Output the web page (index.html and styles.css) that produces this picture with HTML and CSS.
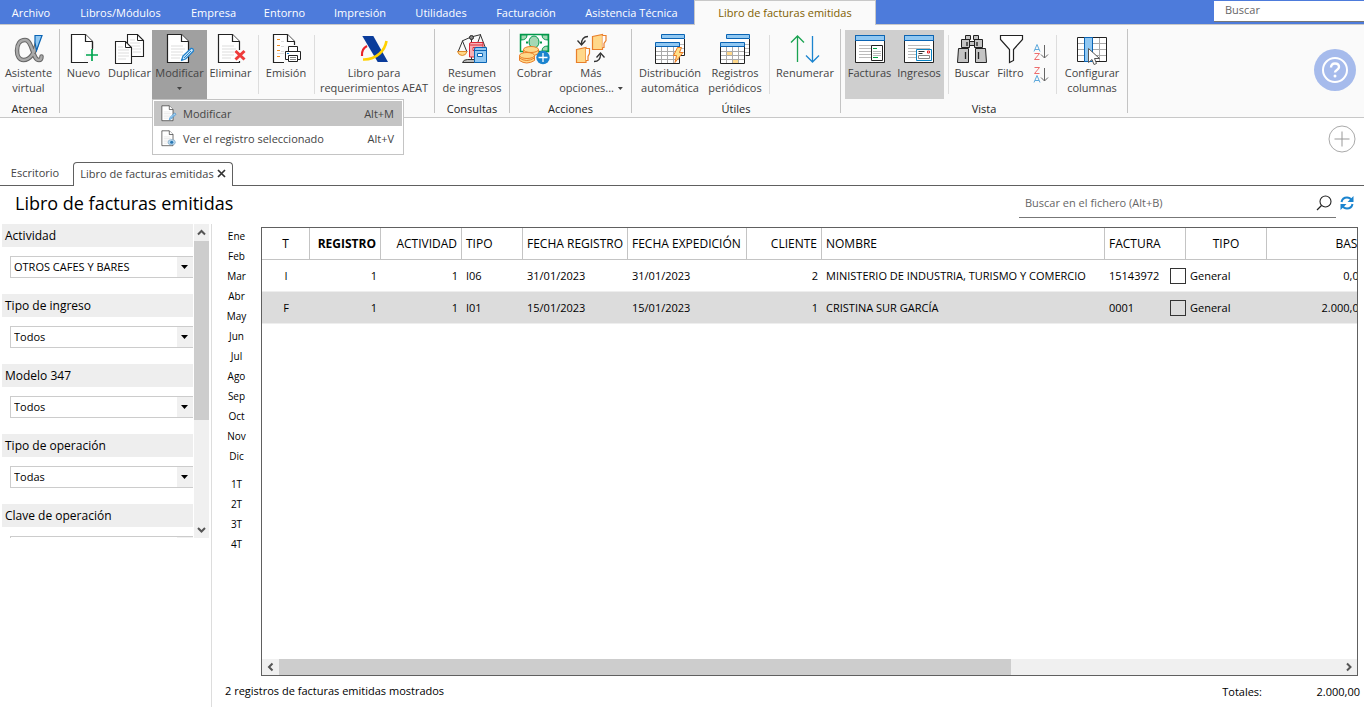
FILE: index.html
```html
<!DOCTYPE html>
<html lang="es">
<head>
<meta charset="utf-8">
<title>Libro de facturas emitidas</title>
<link rel="stylesheet" href="styles.css">
</head>
<body>
<svg class="defs" aria-hidden="true">
  <defs>
    <g id="doc"><path d="M3.500 1.500h14l7 7v21h-21z" fill="#fff" stroke="#222" stroke-width="1.200"/><path d="M17.500 1.500v7h7" fill="#fff" stroke="#222" stroke-width="1.200"/></g>
    <g id="doc-lines"><path d="M7 13h12M7 16h14M7 19h12M7 22h12M7 25h9" stroke="#ddd" fill="none"/></g>
    <g id="pencil"><path d="M17.500 27.500l1.500-4.500 8-7.500q2.500-.5 2.500 2.500l-8 8z" fill="#cfe8fa" stroke="#2382cc" stroke-width="1.300" stroke-linejoin="round"/><path d="M20 25l7-7" stroke="#2382cc"/></g>
    <g id="tables">
      <path d="M7.500 1.500h23v21h-23z" fill="#fff"/><path d="M26 11.500h4M26 15.500h4M26 19.500h4" stroke="#bbb"/><path d="M30.500 6v16.500h-4" fill="none" stroke="#222"/><path d="M7.500 1.500h23v4h-23z" fill="#91c8f2" stroke="#0a64b4"/>
      <path d="M1.500 13h24v17.500h-24z" fill="#fff" stroke="#222"/><path d="M7.500 14v16M13.500 14v16M19.500 14v16M2 18.500h23M2 22.500h23M2 26.500h23" stroke="#aaa"/><path d="M1.500 9.500h24v4h-24z" fill="#91c8f2" stroke="#0a64b4"/>
    </g>
    <g id="window"><path d="M1.500 2.500h29v27h-29z" fill="#fff" stroke="#222"/><path d="M1.500 2.500h29v5h-29z" fill="#91c8f2" stroke="#0a64b4"/><path d="M5 12.500h22M5 15.500h22M5 18.500h12M5 21.500h12M5 24.500h12" stroke="#bbb"/></g>
  </defs>
</svg>

<div class="app">
  <header class="menubar">
    <nav class="tabs" aria-label="Menú principal">
      <button>Archivo</button><button>Libros/Módulos</button><button>Empresa</button><button>Entorno</button><button>Impresión</button><button>Utilidades</button><button>Facturación</button><button>Asistencia Técnica</button><button class="current">Libro de facturas emitidas</button>
    </nav>
    <input class="menu-search" type="text" placeholder="Buscar" aria-label="Buscar">
  </header>

  <section class="ribbon">
    <div class="group g-atenea">
      <div class="tools">
        <button class="tool"><svg class="icon" viewBox="0 0 32 32"><g fill="none" stroke-linecap="round"><path d="M24 9C22 20 17 27 10.500 27 6 27 4 22.500 4 17.500 4 11 7 7 12 7 20 7 19 27 26 27 28 27 28.500 25 28.500 23.500" stroke="#666" stroke-width="4.500"/><path d="M24 9C22 20 17 27 10.500 27 6 27 4 22.500 4 17.500 4 11 7 7 12 7 20 7 19 27 26 27 28 27 28.500 25 28.500 23.500" stroke="#aaa" stroke-width="2.400"/></g><path d="M22 2.500h7l-5.500 15-1.500-8z" fill="#91c8f2" stroke="#0a64b4" stroke-width="1.200"/></svg><span>Asistente<br>virtual</span></button>
      </div>
      <div class="caption">Atenea</div>
    </div>

    <div class="group g-edit">
      <div class="tools">
        <button class="tool"><svg class="icon" viewBox="0 0 32 32"><use href="#doc"/><path d="M16 17h14v14H16z" fill="#fafafa"/><path d="M16 29.500h4M24.500 9v6" stroke="#222" stroke-width="1.200"/><path d="M24 16v12M18 22h12" stroke="#00a550" stroke-width="1.700"/></svg><span>Nuevo</span></button>
        <button class="tool"><svg class="icon" viewBox="0 0 32 32"><path d="M13.500 1.500h10l6 6v16h-16z" fill="#fff" stroke="#222" stroke-width="1.100"/><path d="M23.500 1.500v6h6" fill="none" stroke="#222"/><path d="M16 7h5M16 10h10M16 13h10M18 16h9M19 19h8" stroke="#ddd"/><path d="M1.500 8.500h10l6 6v16h-16z" fill="#fff" stroke="#222" stroke-width="1.100"/><path d="M11.500 8.500v6h6" fill="none" stroke="#222"/><path d="M4 14h5M4 17h11M4 20h11M4 23h11M4 26h8" stroke="#ddd"/></svg><span>Duplicar</span></button>
        <div class="dropdown">
          <button class="tool pressed" aria-expanded="true"><svg class="icon" viewBox="0 0 32 32"><use href="#doc"/><use href="#doc-lines"/><use href="#pencil"/></svg><span>Modificar</span><i class="caret"></i></button>
          <div class="menu">
            <button class="menu-item hover"><svg viewBox="0 0 32 32"><use href="#doc"/><use href="#doc-lines"/><use href="#pencil"/></svg><span>Modificar</span><kbd>Alt+M</kbd></button>
            <button class="menu-item"><svg viewBox="0 0 32 32"><use href="#doc"/><use href="#doc-lines"/><ellipse cx="22" cy="23" rx="7" ry="5" fill="#b8d8ef" stroke="#7199b8"/><circle cx="22" cy="23" r="3" fill="#2878b4"/></svg><span>Ver el registro seleccionado</span><kbd>Alt+V</kbd></button>
          </div>
        </div>
        <button class="tool"><svg class="icon" viewBox="0 0 32 32"><use href="#doc"/><use href="#doc-lines"/><path d="M20 17h11v11H20z" fill="#fafafa"/><path d="M20.500 18l9 8.500M29.500 18l-9 8.500" stroke="#ee3a3a" stroke-width="3"/></svg><span>Eliminar</span></button>
        <i class="sep"></i>
        <button class="tool"><svg class="icon" viewBox="0 0 32 32"><use href="#doc"/><path d="M7 6.500h3M7 12.500h3M7 17.500h3M7 23.500h3" stroke="#f28c1e"/><path d="M11 8.500h3M11 13.500h8M11 18.500h4M7 20.500h7" stroke="#ddd"/><path d="M14 12h17v18H14z" fill="#fafafa"/><path d="M18.500 18v-4.500h9V18" fill="#fff" stroke="#222"/><path d="M15.500 18.500h15v8h-15z" fill="#fff" stroke="#222"/><path d="M18.500 22.500h9v6h-9z" fill="#fff" stroke="#222"/><path d="M20 24.500h6M20 26.500h6" stroke="#888"/><path d="M17 20.500h2" stroke="#1683d8"/></svg><span>Emisión</span></button>
        <i class="sep"></i>
        <button class="tool"><svg class="icon" viewBox="0 0 32 32"><path d="M4.300 3h11l14.700 26H19.700z" fill="#0a3c9b"/><path d="M9 13C5 15 3.500 18 4 23" fill="none" stroke="#e8232a" stroke-width="2.200"/><path d="M28.500 8C27 17 19 27 5 26.500" fill="none" stroke="#ffd100" stroke-width="2.600"/></svg><span>Libro para<br>requerimientos AEAT</span></button>
      </div>
    </div>

    <div class="group g-query">
      <div class="tools">
        <button class="tool"><svg class="icon" viewBox="0 0 32 32"><path d="M6.500 29.500q1-3 5-3h7v3z" fill="#bbb" stroke="#333"/><path d="M15.500 5v21M6 8l9-4 10-2.500M6.500 8L2 19M6.500 8l4.500 11M24.500 2l5 13M24.500 2L22 9" fill="none" stroke="#333"/><circle cx="15.500" cy="4.500" r="2" fill="#888" stroke="#222"/><path d="M1.500 18.500h9.500q-1 4-4.700 4t-4.800-4z" fill="#ffd88a" stroke="#e08a2c"/><path d="M13.500 11q0-1.500 1.500-1.500h12V24H13.500z" fill="#f7b0b4" stroke="#dc2a38"/><path d="M14 12h13M17 14.500h5v3h-5z" fill="#fff" stroke="#dc2a38"/><path d="M18.500 16q0-1.500 1.500-1.500h10.500v15h-12z" fill="#91c8f2" stroke="#0a64b4"/><path d="M19 17.500h11" stroke="#0a64b4"/><path d="M21.500 20.500h5v3h-5z" fill="#fff" stroke="#0a64b4"/></svg><span>Resumen<br>de ingresos</span></button>
      </div>
      <div class="caption">Consultas</div>
    </div>

    <div class="group g-actions">
      <div class="tools">
        <button class="tool"><svg class="icon" viewBox="0 0 32 32"><path d="M1.500 1.500h28v17h-28z" fill="#fff" stroke="#00984a" stroke-width="1.500"/><path d="M2 2h6q0 5-6 5zM29 2h-6q0 5 6 5zM29 18h-6q0-5 6-5z" fill="#a5d8b4" stroke="#00984a"/><ellipse cx="15" cy="9" rx="5" ry="6" fill="#a5d8b4" stroke="#00984a"/><path d="M7 9.500h2M21 9.500h2" stroke="#00984a" stroke-width="2"/><g fill="#ffd88a" stroke="#e97f2a"><path d="M4.500 16.500v4q7 5 15 0v-4z"/><ellipse cx="12" cy="16.500" rx="7.500" ry="3"/><path d="M.5 22.500v5q7 5 15 0v-5z"/><path d="M.5 25q7 5 15 0" fill="none"/><ellipse cx="8" cy="22.500" rx="7.500" ry="3"/></g><circle cx="24" cy="24.500" r="6.700" fill="#1b84cf"/><path d="M24 20v9M19.500 24.500h9" stroke="#fff" stroke-width="1.300"/></svg><span>Cobrar</span></button>
        <button class="tool"><svg class="icon" viewBox="0 0 32 32"><g fill="#ffd88a" stroke="#e97f2a" stroke-width="1.200"><path d="M17.500 3.500l10-2v15h-10z"/><path d="M27.500 2.500h3.500v5l-2 3v4h-1.500" fill="#fff"/><path d="M1.500 16.500l9.500-2v15H1.500z"/><path d="M11 15.500h3.500v5l-1.500 3v4h-2" fill="#fff"/></g><path d="M13 3.500Q6.500 3.500 6.500 11M2.500 7.500l4 4.500 4-4.500M19 28.500q6.500 0 6.500-7M21.500 24.500l4-4.500 4 4.500" fill="none" stroke="#333" stroke-width="1.300"/></svg><span>Más<br>opciones... <i class="caret inline"></i></span></button>
      </div>
      <div class="caption">Acciones</div>
    </div>

    <div class="group g-utils">
      <div class="tools">
        <button class="tool"><svg class="icon" viewBox="0 0 32 32"><use href="#tables"/><path d="M23.500 14.500h4l-2 5h3.500l-8 10 1.500-7h-3z" fill="#ffe08a" stroke="#ee7a22"/></svg><span>Distribución<br>automática</span></button>
        <button class="tool"><svg class="icon" viewBox="0 0 32 32"><use href="#tables"/><path d="M8 19h5v3H8zM14 27h5v3h-5z" fill="#ffd88a"/></svg><span>Registros<br>periódicos</span></button>
        <i class="sep"></i>
        <button class="tool"><svg class="icon" viewBox="0 0 32 32"><path d="M8.500 29V3M2 9.500L8.500 3 15 9.500" fill="none" stroke="#1aa351" stroke-width="1.300"/><path d="M23.500 3v26M17 22.500l6.500 6.500 6.500-6.500" fill="none" stroke="#1b84cf" stroke-width="1.300"/></svg><span>Renumerar</span></button>
      </div>
      <div class="caption">Útiles</div>
    </div>

    <div class="group g-view">
      <div class="tools">
        <button class="tool active"><svg class="icon" viewBox="0 0 32 32"><use href="#window"/><path d="M17.500 12.500h11v15h-11z" fill="#fff" stroke="#222"/><path d="M19 15.500h4M19 24.500h5" stroke="#00a040"/><path d="M19 18.500h8M19 20.500h8M19 22.500h8" stroke="#bbb"/></svg><span>Facturas</span></button>
        <button class="tool active"><svg class="icon" viewBox="0 0 32 32"><use href="#window"/><path d="M13.500 16.500h15v11h-15z" fill="#fff" stroke="#0a84c4"/><path d="M15.500 18.500h6M15.500 20.500h4" stroke="#333"/><path d="M24.500 18h2v2h-2z" fill="none" stroke="#e8232a"/><path d="M15.500 22.500h11v3h-11z" fill="#fff" stroke="#888"/></svg><span>Ingresos</span></button>
        <i class="sep"></i>
        <button class="tool"><svg class="icon" viewBox="0 0 32 32"><g fill="#c4c4c4" stroke="#222"><path d="M9.500 2.500h5v4h-5zM17.500 2.500h5v4h-5zM5.500 6.500h8v8h-8zM18.500 6.500h8v8h-8zM13.500 8.500h5v4h-5zM2.500 15.500h10v14h-11zM19.500 15.500h10l1 14h-11z"/></g><path d="M11 9v4M21 9v4M9.500 19v7M22.500 19v7" stroke="#222" stroke-width="1.300"/></svg><span>Buscar</span></button>
        <button class="tool"><svg class="icon" viewBox="0 0 32 32"><path d="M5.500 2.500h22v4l-9 10v11l-4 2v-13l-9-10z" fill="#fff" stroke="#222" stroke-width="1.200"/></svg><span>Filtro</span></button>
        <div class="sorts">
          <button class="sort" aria-label="Orden ascendente"><svg viewBox="0 0 16 17" fill="none"><path class="blue" d="M1 7.500l3-7 3 7M2 5.500h4"/><path class="red" d="M1.500 9.500h5l-5 6h5"/><path d="M11.500 1v13M8 10.500l3.500 3.500 3.500-3.500" stroke="#666"/></svg></button>
          <button class="sort" aria-label="Orden descendente"><svg viewBox="0 0 16 17" fill="none"><path class="red" d="M1.500 .5h5l-5 6h5"/><path class="blue" d="M1 15.500l3-7 3 7M2 13.500h4"/><path d="M11.500 1v13M8 10.500l3.500 3.500 3.500-3.500" stroke="#666"/></svg></button>
        </div>
        <i class="sep"></i>
        <button class="tool"><svg class="icon" viewBox="0 0 32 32"><path d="M1.500 4.500h29v24h-29z" fill="#fff" stroke="#222"/><path d="M2 10.500h28M2 16.500h28M2 22.500h28M23.500 5v23" stroke="#aaa"/><path d="M8.500 4.500h8v24h-8z" fill="#91c8f2" stroke="#0a64b4"/><path d="M12.500 15.500v14l3.500-3 2 5 2.500-1-2-5h5z" fill="#fff" stroke="#555"/></svg><span>Configurar<br>columnas</span></button>
      </div>
      <div class="caption">Vista</div>
    </div>

    <button class="help" aria-label="Ayuda"><svg viewBox="0 0 42 42"><circle cx="21" cy="21" r="21" fill="#a6bbec"/><circle cx="21" cy="21" r="12" fill="none" stroke="#fff" stroke-width="2"/><path d="M17 18.500q0-4 4-4t4 3.500c0 3-4 3-4 5.500" fill="none" stroke="#fff" stroke-width="2.400"/><circle cx="21" cy="27" r="1.500" fill="#fff"/></svg></button>
  </section>

  <div class="desk-bar"><button class="add" aria-label="Añadir"><svg viewBox="0 0 28 28"><circle cx="14" cy="14" r="13" fill="none" stroke="#aaa"/><path d="M14 6.500v15M6.500 14h15" stroke="#999"/></svg></button></div>

  <div class="doc-tabs">
    <button class="doc-tab">Escritorio</button>
    <button class="doc-tab open">Libro de facturas emitidas <svg viewBox="0 0 9 9"><path d="M1 1l7 7M8 1L1 8" stroke="#333" stroke-width="1.700"/></svg></button>
    <i class="rest"></i>
  </div>

  <div class="page-head">
    <h1>Libro de facturas emitidas</h1>
    <div class="file-search">
      <input type="text" placeholder="Buscar en el fichero (Alt+B)" aria-label="Buscar en el fichero">
      <svg viewBox="0 0 16 16"><circle cx="9.500" cy="6.500" r="5.500" fill="none" stroke="#222" stroke-width="1.100"/><path d="M5.500 10.500L1 15" stroke="#222" stroke-width="1.200"/></svg>
    </div>
    <button class="refresh" aria-label="Actualizar"><svg viewBox="0 0 14 14"><g fill="none" stroke="#1b84cf" stroke-width="2"><path d="M1.500 6Q2.500 1.500 7 1.500q3 0 4.500 2.500"/><path d="M12.500 8Q11.500 12.500 7 12.500q-3 0-4.500-2.500"/></g><path d="M13.500 0v6h-6zM.5 14V8h6z" fill="#1b84cf"/></svg></button>
  </div>

  <main class="work">
    <aside class="side">
      <div class="filter-pane">
        <form class="filters">
          <label for="f1">Actividad</label><div class="select"><select id="f1"><option>OTROS CAFES Y BARES</option></select><i class="caret"></i></div>
          <label for="f2">Tipo de ingreso</label><div class="select"><select id="f2"><option>Todos</option></select><i class="caret"></i></div>
          <label for="f3">Modelo 347</label><div class="select"><select id="f3"><option>Todos</option></select><i class="caret"></i></div>
          <label for="f4">Tipo de operación</label><div class="select"><select id="f4"><option>Todas</option></select><i class="caret"></i></div>
          <label for="f5">Clave de operación</label><div class="select"><select id="f5"><option></option></select><i class="caret"></i></div>
        </form>
        <div class="vbar"><svg viewBox="0 0 15 17"><path d="M4 10.500L7.500 7l3.500 3.500" fill="none" stroke="#555" stroke-width="2"/></svg><i class="vthumb"></i><svg viewBox="0 0 15 17"><path d="M4 7l3.500 3.500L11 7" fill="none" stroke="#555" stroke-width="2"/></svg></div>
      </div>
    </aside>

    <nav class="periods" aria-label="Periodos">
      <button>Ene</button><button>Feb</button><button>Mar</button><button>Abr</button><button>May</button><button>Jun</button><button>Jul</button><button>Ago</button><button>Sep</button><button>Oct</button><button>Nov</button><button>Dic</button>
      <button class="first-quarter">1T</button><button>2T</button><button>3T</button><button>4T</button>
    </nav>

    <section class="content">
      <div class="grid-box">
        <div class="grid-view">
          <table>
            <colgroup><col class="c-t"><col class="c-reg"><col class="c-act"><col class="c-tipo"><col class="c-freg"><col class="c-fexp"><col class="c-cli"><col class="c-nom"><col class="c-fac"><col class="c-gen"><col class="c-base"></colgroup>
            <thead><tr><th class="mid">T</th><th class="num sorted">REGISTRO</th><th class="num">ACTIVIDAD</th><th>TIPO</th><th>FECHA REGISTRO</th><th>FECHA EXPEDICIÓN</th><th class="num">CLIENTE</th><th>NOMBRE</th><th>FACTURA</th><th class="mid">TIPO</th><th class="num">BASE</th></tr></thead>
            <tbody>
              <tr><td class="mid">I</td><td class="num">1</td><td class="num">1</td><td>I06</td><td>31/01/2023</td><td>31/01/2023</td><td class="num">2</td><td>MINISTERIO DE INDUSTRIA, TURISMO Y COMERCIO</td><td class="check"><div><span>15143972</span><input type="checkbox" aria-label="Factura 15143972"></div></td><td>General</td><td class="num">0,00</td></tr>
              <tr class="selected"><td class="mid">F</td><td class="num">1</td><td class="num">1</td><td>I01</td><td>15/01/2023</td><td>15/01/2023</td><td class="num">1</td><td>CRISTINA SUR GARCÍA</td><td class="check"><div><span>0001</span><input type="checkbox" aria-label="Factura 0001"></div></td><td>General</td><td class="num">2.000,00</td></tr>
            </tbody>
          </table>
        </div>
        <div class="hbar"><svg viewBox="0 0 17 16"><path d="M10.500 4.500L7 8l3.500 3.500" fill="none" stroke="#555" stroke-width="2"/></svg><div class="track"><i class="hthumb"></i></div><svg viewBox="0 0 17 16"><path d="M7 4.500L10.500 8 7 11.500" fill="none" stroke="#555" stroke-width="2"/></svg></div>
      </div>
    </section>

    <footer class="status"><span class="count">2 registros de facturas emitidas mostrados</span><span class="totals">Totales:</span><span class="amount">2.000,00</span></footer>
  </main>
</div>
</body>
</html>
```
FILE: styles.css
```css
* { box-sizing: border-box; }

body {
  margin: 0;
  font: 11px/15px "Open Sans", "Noto Sans", sans-serif;
  color: #000;
  background: #fff;
}

button, input, select { font: inherit; color: inherit; border: 0; padding: 0; margin: 0; background: none; border-radius: 0; }
input::placeholder { color: #666; opacity: 1; }
svg { display: block; }
.defs { position: absolute; width: 0; height: 0; }

.app { display: flex; flex-direction: column; min-height: 100vh; overflow: hidden; }

/* Menu bar */
.menubar { display: flex; justify-content: space-between; height: 25px; background: #4d7bdb; border-bottom: 1px solid #c8c8c8; }
.tabs { display: grid; grid-template-columns: 62px 117px 69px 73px 78px 84px 86px 125px 182px; height: 25px; }
.tabs button { color: #fff; white-space: nowrap; }
.tabs .current { background: #fafafa; color: #7f6000; border: 1px solid #c8c8c8; border-bottom: 0; padding-bottom: 1px; }
.menu-search { width: 150px; height: 21px; margin-top: 1px; padding: 0 11px 3px; background: #fff; border-bottom: 1px solid #777; outline: 0; }

/* Ribbon */
.ribbon { display: flex; height: 93px; padding-top: 4px; background: #fafafa; border-bottom: 1px solid #c8c8c8; color: #444; }
.group { display: flex; flex-direction: column; height: 84px; border-right: 1px solid #c4c4c4; }
.tools { display: grid; height: 70px; padding-top: 1px; }
.caption { line-height: 20px; text-align: center; color: #222; }
.g-atenea { width: 60px; }
.g-atenea .tools { grid-template-columns: 57px; }
.g-edit { width: 375px; }
.g-edit .tools { grid-template-columns: 47px 45px 55px 47px 8px 48px 8px 112px; }
.g-query { width: 75px; }
.g-actions { width: 122px; }
.g-actions .tools { grid-template-columns: 49px 64px; }
.g-utils { width: 209px; }
.g-utils .tools { grid-template-columns: 70px 60px 8px 64px; padding-left: 3px; }
.g-view { width: 287px; }
.g-view .tools { grid-template-columns: 49px 50px 8px 40px 37px 23px 8px 64px; padding-left: 4px; }
.tool { display: flex; flex-direction: column; align-items: center; width: 100%; height: 69px; padding-top: 3px; white-space: nowrap; }
.icon { width: 32px; height: 32px; flex: none; }
.pressed { background: #a0a0a0; }
.active { background: #cfcfcf; }
.caret { width: 5px; height: 3px; background: currentColor; clip-path: polygon(0 0, 100% 0, 50% 100%); }
.pressed .caret { margin-top: 7px; }
.caret.inline { display: inline-block; margin: 0 0 2px 1px; }
.sep { width: 1px; height: 59px; margin: 5px auto 0; background: #ddd; }
.sorts { display: flex; flex-direction: column; gap: 6px; padding: 14px 4px 0; }
.sort svg { width: 16px; height: 17px; }
.blue { stroke: #5ea9dc; }
.red { stroke: #ee6c6c; }
.help { width: 42px; margin: 0 8px 6px auto; }

/* Drop-down menu */
.dropdown { position: relative; }
.menu { position: absolute; z-index: 2; top: 69px; left: 0; width: 252px; padding: 1px 1px 3px; background: #fff; border: 1px solid #c4c4c4; }
.menu-item { display: flex; align-items: center; width: 100%; height: 25px; padding: 0 8px 1px 6px; text-align: left; }
.menu-item svg { width: 17px; height: 17px; margin-right: 6px; }
.menu-item kbd { margin-left: auto; font: inherit; }
.hover { background: #c4c4c4; }

/* Desk bar and document tabs */
.desk-bar { display: flex; justify-content: flex-end; align-items: center; height: 44px; padding: 0 8px 2px; }
.add { width: 28px; }
.doc-tabs { display: flex; height: 24px; color: #444; }
.doc-tab { width: 73px; padding: 0 3px 2px 0; border-bottom: 1px solid #606060; }
.doc-tab.open { display: flex; align-items: center; justify-content: center; gap: 3px; width: 160px; padding: 0 0 2px; border: 1px solid #606060; border-bottom: 0; border-radius: 4px 4px 0 0; white-space: nowrap; }
.doc-tab svg { width: 9px; height: 9px; }
.rest { flex: 1; border-bottom: 1px solid #606060; }

/* Page heading */
.page-head { display: flex; align-items: center; height: 38px; padding: 0 10px 4px 15px; }
h1 { margin: 0; font-size: 18px; font-weight: 400; line-height: 24px; }
.file-search { display: flex; align-items: center; width: 317px; height: 30px; margin-left: auto; padding: 0 4px 0 6px; border-bottom: 1px solid #777; }
.file-search input { flex: 1; outline: 0; }
.file-search svg { width: 16px; height: 16px; }
.refresh { width: 14px; margin-left: 4px; }
.refresh svg { width: 14px; height: 14px; }

/* Working area */
.work { display: grid; grid-template-columns: 212px 49px minmax(0, 1fr); grid-template-rows: 1fr 31px; flex: 1; }
.side { grid-row: 1 / 3; border-right: 1px solid #ddd; }
.filter-pane { display: flex; height: 314px; overflow: hidden; }
.filters { flex: 1; padding-left: 2px; font-size: 12px; }
.filters label { display: block; height: 23px; padding-left: 3px; line-height: 23px; background: #eee; }
.select { display: grid; grid-template-columns: 1fr 17px; height: 22px; margin: 9px 0 16px 8px; border: 1px solid #ccc; border-right: 0; background: linear-gradient(to left, #f0f0f0 16px, #fff 16px); font-size: 11px; }
.select select { grid-area: 1 / 1 / 2 / 3; appearance: none; padding: 0 0 1px 3px; }
.select .caret { grid-area: 1 / 2; place-self: center; width: 7px; height: 4px; pointer-events: none; }
.vbar { display: flex; flex-direction: column; width: 15px; margin: 0 2px 0 1px; background: #f0f0f0; }
.vbar svg { height: 17px; }
.vbar svg:last-child { margin-top: auto; }
.vthumb { height: 57%; background: #cdcdcd; }
.periods { display: flex; flex-direction: column; padding-top: 2px; font-size: 10px; }
.periods button { height: 20px; }
.periods .first-quarter { margin-top: 8px; }
.content { display: flex; padding: 3px 6px 0 0; }
.grid-box { display: flex; flex-direction: column; flex: 1; min-width: 0; border: 1px solid #606060; }
.grid-view { flex: 1; overflow: hidden; }
table { width: 1107px; table-layout: fixed; border-collapse: separate; border-spacing: 0; }
th, td { height: 32px; padding: 0 4px; text-align: left; font-weight: 400; white-space: nowrap; border-bottom: 1px solid #eee; }
th { font-size: 12px; border-right: 1px solid #c4c4c4; border-bottom-color: #c4c4c4; }
.sorted { font-weight: 700; }
.mid { text-align: center; }
.num { text-align: right; }
.selected { background: #dcdcdc; }
.check { padding-right: 0; }
.check div { display: flex; align-items: center; justify-content: space-between; }
.check input { appearance: none; width: 16px; height: 16px; border: 1px solid #333; }
.c-t { width: 48px; }
.c-reg { width: 71px; }
.c-act { width: 81px; }
.c-tipo { width: 61px; }
.c-freg { width: 105px; }
.c-fexp { width: 119px; }
.c-cli { width: 75px; }
.c-nom { width: 283px; }
.c-fac { width: 81px; }
.c-gen { width: 81px; }
.c-base { width: 102px; }
.hbar { display: flex; height: 16px; background: #f0f0f0; }
.hbar svg { width: 17px; height: 16px; flex: none; }
.track { flex: 1; display: flex; }
.hthumb { width: 69%; background: #cdcdcd; }
.status { grid-column: 2 / 4; display: flex; align-items: center; padding: 0 4px 0 13px; }
.count { padding-bottom: 3px; }
.totals { margin-left: auto; }
.amount { width: 98px; text-align: right; }
```
